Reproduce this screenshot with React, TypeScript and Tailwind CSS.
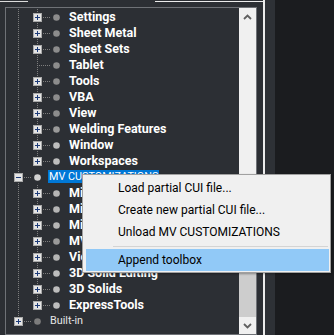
import React from "react"

type Row = {
  label: string
  level: 1 | 2
  box: "plus" | "minus" | null
  last?: boolean
  bold: boolean
  selected?: boolean
  dot: string
}

const rows: Row[] = [
  { label: "Settings", level: 2, box: "plus", bold: true, dot: "#8c8c8c" },
  { label: "Sheet Metal", level: 2, box: "plus", bold: true, dot: "#8c8c8c" },
  { label: "Sheet Sets", level: 2, box: "plus", bold: true, dot: "#8c8c8c" },
  { label: "Tablet", level: 2, box: null, bold: true, dot: "#8c8c8c" },
  { label: "Tools", level: 2, box: "plus", bold: true, dot: "#8c8c8c" },
  { label: "VBA", level: 2, box: "plus", bold: true, dot: "#8c8c8c" },
  { label: "View", level: 2, box: "plus", bold: true, dot: "#8c8c8c" },
  { label: "Welding Features", level: 2, box: "plus", bold: true, dot: "#9a9a9a" },
  { label: "Window", level: 2, box: "plus", bold: true, dot: "#bdbdbd" },
  { label: "Workspaces", level: 2, box: "plus", bold: true, last: true, dot: "#bdbdbd" },
  { label: "MV CUSTOMIZATIONS", level: 1, box: "minus", bold: false, selected: true, dot: "#d2d2d2" },
  { label: "Miscellaneous", level: 2, box: "plus", bold: true, dot: "#b5b5b5" },
  { label: "Mirror Tools", level: 2, box: "plus", bold: true, dot: "#b5b5b5" },
  { label: "Mid Points", level: 2, box: "plus", bold: true, dot: "#b5b5b5" },
  { label: "MV Utilities", level: 2, box: "plus", bold: true, dot: "#9a9a9a" },
  { label: "View Tools", level: 2, box: "plus", bold: true, dot: "#b5b5b5" },
  { label: "3D Solid Editing", level: 2, box: "plus", bold: true, dot: "#bdbdbd" },
  { label: "3D Solids", level: 2, box: "plus", bold: true, dot: "#bdbdbd" },
  { label: "ExpressTools", level: 2, box: "plus", bold: true, last: true, dot: "#bdbdbd" },
  { label: "Built-in", level: 1, box: "plus", bold: false, last: true, dot: "#7d7d7d" },
]

const lineColor = "#7e7e7e"

function Guide() {
  const dots = []
  for (let y = 0; y < 16; y += 2) dots.push(<rect key={y} x={9} y={y} width={1} height={1} fill={lineColor} />)
  return (
    <svg width="19" height="16" className="shrink-0" shapeRendering="crispEdges">
      {dots}
    </svg>
  )
}

function NodeGlyph({ box, last, dot }: { box: Row["box"]; last?: boolean; dot: string }) {
  const dots = []
  const end = last ? 9 : 16
  for (let y = 0; y < end; y += 2) dots.push(<rect key={"v" + y} x={9} y={y} width={1} height={1} fill={lineColor} />)
  for (let x = 11; x < 23; x += 2) dots.push(<rect key={"h" + x} x={x} y={8} width={1} height={1} fill={lineColor} />)
  return (
    <svg width="41" height="16" className="shrink-0">
      <g shapeRendering="crispEdges">{dots}</g>
      {box && (
        <g shapeRendering="crispEdges">
          <rect x={5.5} y={4.5} width={8} height={8} fill="#e4e4e4" stroke="#a9a9a9" />
          <rect x={7} y={8} width={5} height={1} fill="#1d3b78" />
          {box === "plus" && <rect x={9} y={6} width={1} height={5} fill="#1d3b78" />}
        </g>
      )}
      <circle cx={28.5} cy={8.5} r={3.3} fill={dot} />
    </svg>
  )
}

function Chevron({ up }: { up?: boolean }) {
  return (
    <svg width="9" height="6" viewBox="0 0 9 6">
      <polyline
        points={up ? "1,5 4.5,1.5 8,5" : "1,1 4.5,4.5 8,1"}
        fill="none"
        stroke="#606060"
        strokeWidth="1.8"
      />
    </svg>
  )
}

export default function App() {
  return (
    <div className="relative flex w-[334px] h-[335px] overflow-hidden bg-[#1b1c1f] font-['Roboto',sans-serif]">
      <div className="flex w-[275px] h-full bg-[#2c2f34]">
        <div className="flex flex-col w-[265px] h-full border-r-2 border-[#ececec]">
          <div className="flex h-px mt-px">
            <div className="w-[28px] bg-[#dcdcdc]" />
            <div className="flex-1" />
            <div className="w-[108px] bg-[#ececec]" />
          </div>
          <div className="flex ml-[5px] mt-[5px] w-[252px] h-[328px] border border-[#6f7277]">
            <div className="flex-1 overflow-hidden pt-px pl-[3px]">
              {rows.map((r, i) => (
                <div key={i} className="flex items-center h-[16px] whitespace-nowrap">
                  {r.level === 2 && <Guide />}
                  <NodeGlyph box={r.box} last={r.last} dot={r.dot} />
                  {r.selected ? (
                    <span className="ml-[-2px] px-px h-[13px] mt-[-2px] leading-[13px] bg-[#0078d7] text-white text-[10.8px]">
                      {r.label}
                    </span>
                  ) : r.bold ? (
                    <span className="text-[12.5px] font-bold leading-[16px] text-white">{r.label}</span>
                  ) : (
                    <span className="text-[10.8px] leading-[16px] text-[#e6e6e6]">{r.label}</span>
                  )}
                </div>
              ))}
            </div>
            <div className="flex flex-col w-[17px] bg-[#f0f0f0]">
              <div className="flex items-center justify-center h-[17px]">
                <Chevron up />
              </div>
              <div className="flex-1" />
              <div className="h-[126px] bg-[#cdcdcd]" />
              <div className="flex items-center justify-center h-[17px]">
                <Chevron />
              </div>
            </div>
          </div>
        </div>
        <div className="flex-1 bg-[#2e3136]" />
      </div>

      <div className="absolute left-[82px] top-[174px] w-[249px] h-[99px] bg-[#f0f0f0] border border-[#a0a0a0] pt-[2px] text-[12px] text-black shadow-[1px_1px_2px_rgba(0,0,0,0.35)]">
        <div className="h-[22px] leading-[22px] pl-[35px]">Load partial CUI file...</div>
        <div className="h-[22px] leading-[22px] pl-[35px]">Create new partial CUI file...</div>
        <div className="h-[22px] leading-[22px] pl-[35px]">Unload MV CUSTOMIZATIONS</div>
        <div className="flex items-center h-[6px] ml-[30px] mr-[2px]">
          <div className="h-px w-full bg-[#d4d4d4]" />
        </div>
        <div className="h-[22px] leading-[22px] ml-[3px] mr-px pl-[32px] bg-[#91c9f7]">Append toolbox</div>
      </div>
    </div>
  )
}
